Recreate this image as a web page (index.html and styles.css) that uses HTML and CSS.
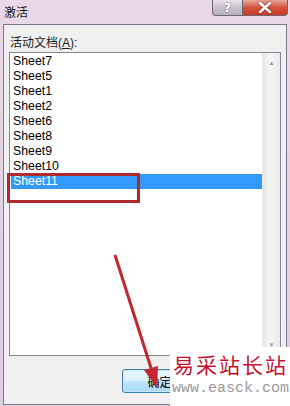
FILE: index.html
```html
<!DOCTYPE html>
<html lang="zh-CN">
<head>
    <meta charset="UTF-8">
    <title>激活</title>
    <link rel="stylesheet" href="styles.css">
</head>
<body>
    <div class="window">
        <div class="titlebar">
            <span class="title">激活</span>
            <div class="caption-btns">
                <div class="cap-btn help">?</div>
                <div class="cap-btn close">
                    <svg width="14" height="11" viewBox="0 0 14 11">
                        <path d="M2 1 L12 10 M12 1 L2 10" stroke="#fff" stroke-width="2.6" stroke-linecap="round"/>
                    </svg>
                </div>
            </div>
        </div>

        <div class="panel">
            <div class="field-label">活动文档(<u>A</u>):</div>
            <div class="listbox">
                <ul class="items">
                    <li>Sheet7</li>
                    <li>Sheet5</li>
                    <li>Sheet1</li>
                    <li>Sheet2</li>
                    <li>Sheet6</li>
                    <li>Sheet8</li>
                    <li>Sheet9</li>
                    <li>Sheet10</li>
                    <li class="selected">Sheet11</li>
                </ul>
                <div class="scrollbar">
                    <span class="arrow up">&#9650;</span>
                    <span class="arrow down">&#9660;</span>
                </div>
            </div>
            <div class="actions">
                <button class="btn">确定</button>
            </div>
        </div>
    </div>

    <!-- annotations drawn over the dialog -->
    <div class="mark-box"></div>
    <svg class="pointer" width="290" height="406" viewBox="0 0 290 406">
        <line x1="115" y1="255" x2="151" y2="368" stroke="#c3262b" stroke-width="3"/>
        <polygon points="157,388 158,366 144,370" fill="#c3262b"/>
    </svg>
    <div class="watermark">
        <div class="wm-name">易采站长站</div>
        <div class="wm-url">www.easck.com</div>
    </div>
</body>
</html>
```

FILE: styles.css
```css
body {
    margin: 0;
    width: 290px;
    height: 406px;
    overflow: hidden;
    position: relative;
    font-family: "Liberation Sans", "Noto Sans CJK SC", sans-serif;
    background: linear-gradient(#e9d9e8, #dccde0);
}
.window {
    height: 406px;
    display: flex;
    flex-direction: column;
    padding: 0 3px 1px 3px;
    box-sizing: border-box;
}
.titlebar {
    height: 24px;
    display: flex;
    align-items: flex-start;
    flex-shrink: 0;
}
.title {
    font-family: "Noto Sans CJK SC", sans-serif;
    font-size: 12px;
    line-height: 16px;
    margin-top: 4px;
    margin-left: 1px;
    color: #1a1a1a;
}
.caption-btns {
    margin-left: auto;
    margin-right: -1px;
    display: flex;
}
.cap-btn {
    height: 16px;
    border: 1px solid #6f6775;
    border-top: none;
    box-sizing: border-box;
    display: flex;
    align-items: center;
    justify-content: center;
}
.help {
    width: 30px;
    border-radius: 0 0 0 4px;
    border-right: none;
    background: linear-gradient(#eae3ea, #c9c2cc 50%, #b9b1bd);
    color: #fff;
    font-family: "DejaVu Sans", sans-serif;
    font-weight: bold;
    font-size: 12px;
    text-shadow: 0 0 2px #555;
}
.close {
    width: 46px;
    border-radius: 0 0 4px 0;
    background: linear-gradient(#e9a99c, #d4543f 50%, #c63c2a);
}
.close svg {
    filter: drop-shadow(0 0 1px #6a1c10);
}
.panel {
    flex: 1;
    border: 1px solid #80788a;
    background: #f0f0f0;
    padding: 10px 5px 0 5px;
    display: flex;
    flex-direction: column;
}
.field-label {
    font-size: 12px;
    line-height: 16px;
    height: 16px;
    margin-left: 1px;
    color: #1a1a1a;
}
.field-label u {
    text-underline-offset: 1px;
}
.listbox {
    margin-top: 1px;
    height: 304px;
    width: 272px;
    box-sizing: border-box;
    border: 1px solid #828790;
    background: #fff;
    display: flex;
}
.items {
    list-style: none;
    margin: 0;
    padding: 1px 0 0 1px;
    flex: 1;
}
.items li {
    height: 15px;
    line-height: 15px;
    font-size: 12.3px;
    padding-left: 2px;
    color: #000;
}
.items li.selected {
    background: #3399ff;
    color: #fff;
}
.scrollbar {
    width: 17px;
    background: linear-gradient(90deg, #e6e6e6, #f5f5f5 40%, #eaeaea);
    border-left: 1px solid #ececec;
    display: flex;
    flex-direction: column;
    justify-content: space-between;
    align-items: center;
}
.arrow {
    font-size: 6px;
    line-height: 12px;
    color: #9a9a9a;
    margin: 4px 0;
}
.actions {
    padding: 13px 0 0 113px;
}
.btn {
    width: 75px;
    height: 24px;
    border: 1px solid #3c7fb1;
    border-radius: 3px;
    background: linear-gradient(#eaf6fd, #d9f0fc 50%, #bee6fd 51%, #a7d9f5);
    font-family: "Noto Sans CJK SC", sans-serif;
    font-size: 12px;
    color: #000;
    padding: 0;
    box-shadow: inset 0 0 0 1px #c8e8fa;
}
.mark-box {
    position: absolute;
    left: 7px;
    top: 173px;
    width: 127px;
    height: 24px;
    border: 3px solid #b22a2e;
}
.pointer {
    position: absolute;
    left: 0;
    top: 0;
}
.watermark {
    position: absolute;
    left: 170px;
    top: 347px;
    width: 120px;
    height: 59px;
    background: #fff;
}
.wm-name {
    font-family: "Noto Sans CJK SC", serif;
    font-size: 21px;
    line-height: 26px;
    margin-top: 4px;
    margin-left: 3px;
    letter-spacing: 2px;
    color: #c8102e;
}
.wm-url {
    font-family: "Liberation Mono", monospace;
    font-size: 15px;
    line-height: 18px;
    margin-top: 3px;
    margin-left: 2px;
    color: #9a9a9a;
}
```
